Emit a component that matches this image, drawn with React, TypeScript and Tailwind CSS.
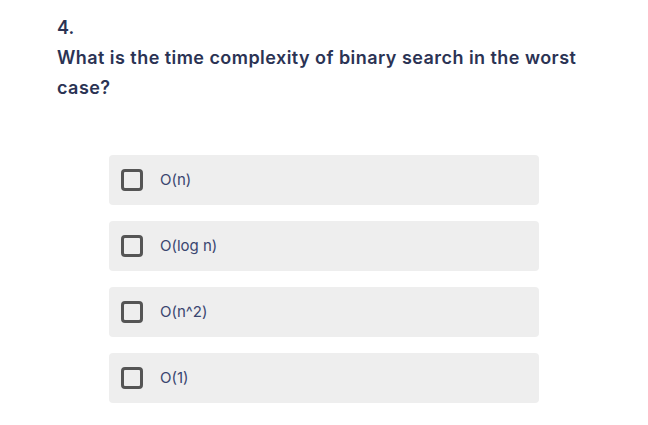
import React from "react";

const options = ["O(n)", "O(log n)", "O(n^2)", "O(1)"];

export default function App() {
  return (
    <div className="min-h-[425px] w-[648px] bg-white pl-[57px] pt-[13px] font-['Inter','Noto_Sans',sans-serif]">
      <div className="text-[18px] font-semibold leading-[30px] text-[#2b3354]">4.</div>
      <div className="w-[545px] text-[18px] font-semibold leading-[30px] tracking-[0.45px] text-[#2b3354]">
        What is the time complexity of binary search in the worst case?
      </div>
      <div className="ml-[52px] mt-[52px] flex w-[430px] flex-col gap-4">
        {options.map((opt) => (
          <label
            key={opt}
            className="flex h-[50px] items-center rounded bg-[#eeeeee] pl-3"
          >
            <span className="h-[22px] w-[22px] rounded-[4px] border-[3px] border-[#555555]" />
            <span className="ml-[17px] text-[15px] text-[#3a4670]">{opt}</span>
          </label>
        ))}
      </div>
    </div>
  );
}
